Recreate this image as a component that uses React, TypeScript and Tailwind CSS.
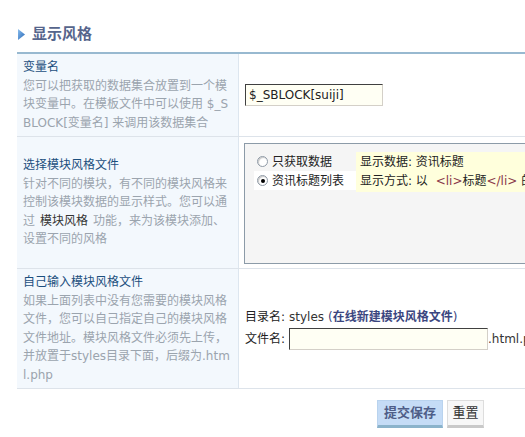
import React from 'react';

const FONT = "font-['DejaVu_Sans','Noto_Sans_CJK_SC',sans-serif]";

const Radio = ({ checked }: { checked?: boolean }) => (
  <span className="w-[11px] h-[11px] rounded-full border border-[#8f9aa6] bg-white flex items-center justify-center shadow-[inset_1px_1px_1px_#c8c8c8]">
    {checked && <span className="w-[4px] h-[4px] rounded-full bg-black" />}
  </span>
);

const Label = ({ title, children }: { title: string; children: React.ReactNode }) => (
  <div className="w-[222px] shrink-0 bg-[#f3f8fd] border-r border-[#dde6ef] pl-[6px] pr-[7px] flex flex-col justify-center leading-[18.5px] break-all">
    <div className="text-[#1c4f7e]">{title}</div>
    <div className="text-[#9ba4ae]">{children}</div>
  </div>
);

export default function App() {
  return (
    <div className={`w-[525px] h-[437px] overflow-hidden bg-white text-[12px] text-[#222] ${FONT}`}>
      <div className="pl-[18px] pt-[24px] h-[44px] flex items-start">
        <div className="h-[20px] flex items-center gap-[7px]">
          <svg width="7" height="11" viewBox="0 0 7 11">
            <defs>
              <linearGradient id="tri" x1="0" y1="0" x2="1" y2="1">
                <stop offset="0" stopColor="#8cc0f0" />
                <stop offset="1" stopColor="#2464b4" />
              </linearGradient>
            </defs>
            <polygon points="0,0 7,5.5 0,11" fill="url(#tri)" />
          </svg>
          <h2 className="text-[15px] font-bold text-[#56658c]">显示风格</h2>
        </div>
      </div>

      <div className="ml-[17px] mt-[8px] w-[620px] border-t-2 border-[#98b9d0]">
        {/* row 1 */}
        <div className="flex h-[83px] border-b border-[#dde3ea]">
          <Label title="变量名">
            您可以把获取的数据集合放置到一个模块变量中。在模板文件中可以使用 $_SBLOCK[变量名] 来调用该数据集合
          </Label>
          <div className="flex-1 pl-[6px] flex items-center">
            <input
              readOnly
              value="$_SBLOCK[suiji]"
              className={`w-[138px] h-[22px] px-[3px] bg-[#fffff4] border border-t-[#404040] border-l-[#404040] border-r-[#d4d0c8] border-b-[#d4d0c8] text-[12px] text-[#222] outline-none ${FONT}`}
            />
          </div>
        </div>

        {/* row 2 */}
        <div className="flex h-[132px] border-b border-[#dde3ea]">
          <Label title="选择模块风格文件">
            针对不同的模块，有不同的模块风格来控制该模块数据的显示样式。您可以通过
            <span className="text-[#333] px-[5px]">模块风格</span>功能，来为该模块添加、设置不同的风格
          </Label>
          <div className="flex-1 pl-[5px] pt-[6px] pb-[4px]">
            <div className="h-full border border-[#8c9ba8] bg-[#f5f5f5] pl-[9px] pt-[8px] flex items-start">
              <div className="w-[102px] flex flex-col">
                <label className="h-[19px] flex items-center gap-[4px] pl-[3px]">
                  <Radio />
                  <span>只获取数据</span>
                </label>
                <label className="h-[19px] flex items-center gap-[4px] pl-[3px] bg-white">
                  <Radio checked />
                  <span>资讯标题列表</span>
                </label>
              </div>
              <div className="flex-1 bg-[#ffffdc] px-[4px] py-[1px] leading-[19px] whitespace-nowrap">
                <div>显示数据: 资讯标题</div>
                <div>
                  显示方式: 以 <span className="text-[#8a3a4a] pl-[4px]">&lt;li&gt;</span>标题
                  <span className="text-[#8a3a4a]">&lt;/li&gt;</span> 的形式显示
                </div>
              </div>
            </div>
          </div>
        </div>

        {/* row 3 */}
        <div className="flex h-[120px] border-b border-[#dde3ea]">
          <Label title="自己输入模块风格文件">
            如果上面列表中没有您需要的模块风格文件，您可以自己指定自己的模块风格文件地址。模块风格文件必须先上传，并放置于styles目录下面，后缀为.html.php
          </Label>
          <div className="flex-1 pl-[6px] flex flex-col justify-center gap-[1px]">
            <div className="h-[19px] flex items-center whitespace-nowrap">
              目录名: <span className="text-[#333] ml-[4px]">styles</span>
              <span className="ml-[4px] text-[#3b4680]">
                (<span className="font-bold">在线新建模块风格文件</span>)
              </span>
            </div>
            <div className="h-[22px] flex items-center whitespace-nowrap">
              <span>文件名:</span>
              <input
                readOnly
                className="ml-[4px] w-[199px] h-[22px] bg-[#fffff4] border border-t-[#404040] border-l-[#404040] border-r-[#d4d0c8] border-b-[#d4d0c8] outline-none"
              />
              <span className="text-[#333]">.html.php</span>
            </div>
          </div>
        </div>
      </div>

      <div className="pl-[377px] pt-[11px] flex gap-[4px]">
        <button className="w-[66px] h-[28px] bg-[#c5dcf6] border border-[#b9d3ee] border-b-[3px] border-b-[#8bb3cb] text-[13px] font-bold text-[#4f5e88]">
          提交保存
        </button>
        <button className="w-[37px] h-[28px] bg-[#f7f7f7] border border-[#dddddd] border-b-[3px] border-b-[#c9c9c9] text-[13px] text-[#333]">
          重置
        </button>
      </div>
    </div>
  );
}
